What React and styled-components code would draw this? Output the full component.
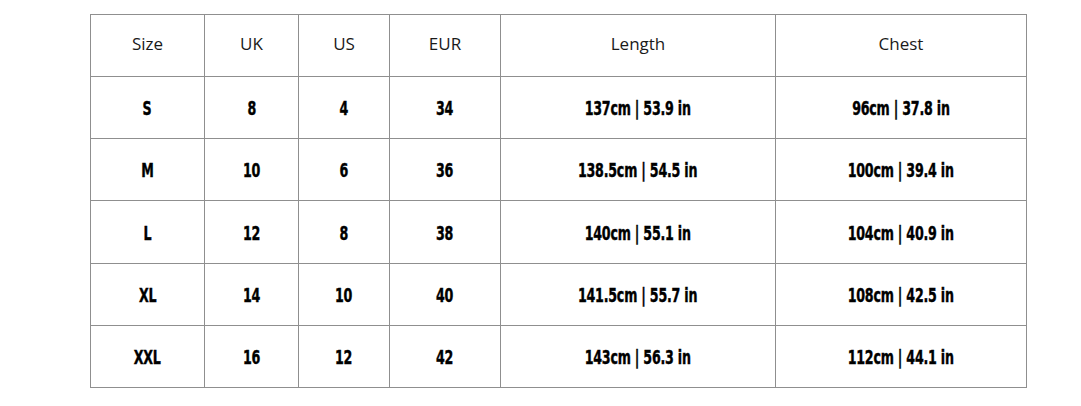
import React from "react";
import styled, { createGlobalStyle } from "styled-components";

const Global = createGlobalStyle`
  html, body { margin: 0; padding: 0; background: #fff; }
  body { font-family: "Open Sans", "Liberation Sans", sans-serif; }
`;

const Page = styled.div`
  padding: 14px 0 0 90px;
`;

const Table = styled.table`
  border-collapse: collapse;
  table-layout: fixed;
  width: 937px;
  border: 1px solid #8f8f8f;
`;

const Col = styled.col`
  width: ${(p) => p.$w}px;
`;

const HeadRow = styled.tr`
  height: 62px;
  border-bottom: 1px solid #000;
`;

const Row = styled.tr`
  height: ${(p) => p.$h}px;
`;

const HeaderCell = styled.th`
  font-family: "Open Sans", "Liberation Sans", sans-serif;
  font-weight: 400;
  font-size: 17px;
  color: #1a1a1a;
  text-align: center;
  vertical-align: middle;
  padding: 0 0 5px 0;
  border-left: 1px solid #8f8f8f;
  border-right: 1px solid #8f8f8f;
`;

const Cell = styled.td`
  text-align: center;
  vertical-align: middle;
  padding: 2px 0 0 0;
  border: 1px solid #8f8f8f;
`;

const Value = styled.span`
  display: inline-block;
  font-family: "DejaVu Sans Condensed", "DejaVu Sans", sans-serif;
  font-weight: 700;
  font-size: 19px;
  color: #000;
  transform: scaleX(0.74);
  letter-spacing: -0.3px;
  -webkit-text-stroke: 0.4px #000;
`;

const widths = [114, 94, 91, 111, 275, 251];
const headers = ["Size", "UK", "US", "EUR", "Length", "Chest"];
const rows = [
  ["S", "8", "4", "34", "137cm | 53.9 in", "96cm | 37.8 in"],
  ["M", "10", "6", "36", "138.5cm | 54.5 in", "100cm | 39.4 in"],
  ["L", "12", "8", "38", "140cm | 55.1 in", "104cm | 40.9 in"],
  ["XL", "14", "10", "40", "141.5cm | 55.7 in", "108cm | 42.5 in"],
  ["XXL", "16", "12", "42", "143cm | 56.3 in", "112cm | 44.1 in"],
];
const heights = [62, 62, 63, 62, 62];

export default function App() {
  return (
    <>
      <Global />
      <Page>
        <Table>
          <colgroup>
            {widths.map((w, i) => (
              <Col key={i} $w={w} />
            ))}
          </colgroup>
          <thead>
            <HeadRow>
              {headers.map((h) => (
                <HeaderCell key={h}>{h}</HeaderCell>
              ))}
            </HeadRow>
          </thead>
          <tbody>
            {rows.map((r, ri) => (
              <Row key={r[0]} $h={heights[ri]}>
                {r.map((v, i) => (
                  <Cell key={i}>
                    <Value>{v}</Value>
                  </Cell>
                ))}
              </Row>
            ))}
          </tbody>
        </Table>
      </Page>
    </>
  );
}
